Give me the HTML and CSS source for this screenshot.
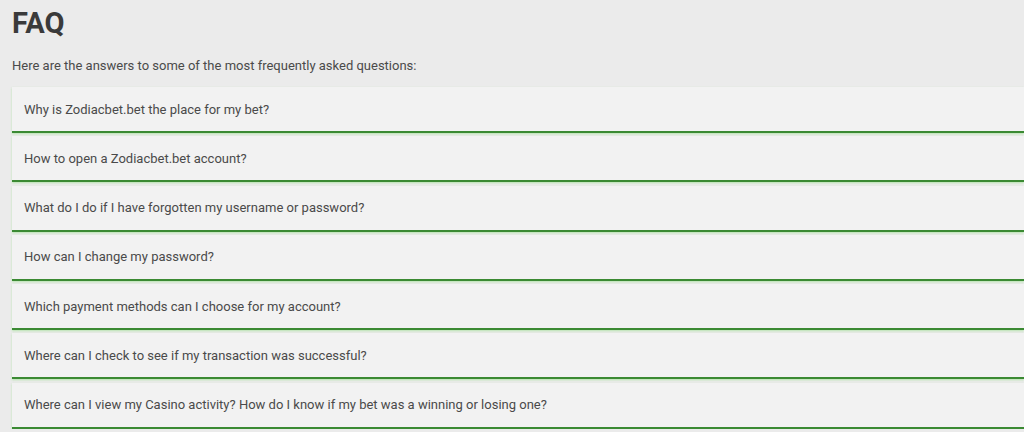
FILE: index.html
```html
<!DOCTYPE html>
<html lang="en">
<head>
    <meta charset="UTF-8">
    <meta name="viewport" content="width=device-width, initial-scale=1.0">
    <title>FAQ</title>
    <link rel="stylesheet" href="styles.css">
</head>

<body>
    <section class="faq">
        <h1>FAQ</h1>
        <p class="intro">Here are the answers to some of the most frequently asked questions:</p>

        <div class="faq-list">
            <div class="faq-item">Why is Zodiacbet.bet the place for my bet?</div>
            <div class="faq-item">How to open a Zodiacbet.bet account?</div>
            <div class="faq-item">What do I do if I have forgotten my username or password?</div>
            <div class="faq-item">How can I change my password?</div>
            <div class="faq-item">Which payment methods can I choose for my account?</div>
            <div class="faq-item">Where can I check to see if my transaction was successful?</div>
            <div class="faq-item">Where can I view my Casino activity? How do I know if my bet was a winning or losing one?</div>
        </div>
    </section>
</body>
</html>
```

FILE: styles.css
```css
body {
    margin: 0;
    background-color: #ebebeb;
    font-family: Roboto, 'Liberation Sans', sans-serif;
    color: #444;
}

.faq {
    padding: 6px 0 0 12px;
}

h1 {
    margin: 0;
    font-size: 29px;
    font-weight: 700;
    color: #3a3a3a;
    line-height: 34px;
}

.intro {
    margin: 18px 0 13px;
    font-size: 13px;
    line-height: 16px;
    color: #4a4a4a;
}

.faq-list {
    display: flex;
    flex-direction: column;
    gap: 3.3px;
}

.faq-item {
    background-color: #f2f2f2;
    border-bottom: 2px solid #3b8a33;
    box-shadow: 0 1px 2px rgba(120, 220, 100, 0.45);
    padding: 0 12px;
    height: 44px;
    display: flex;
    align-items: center;
    font-size: 13px;
    color: #4a4a4a;
}
```
